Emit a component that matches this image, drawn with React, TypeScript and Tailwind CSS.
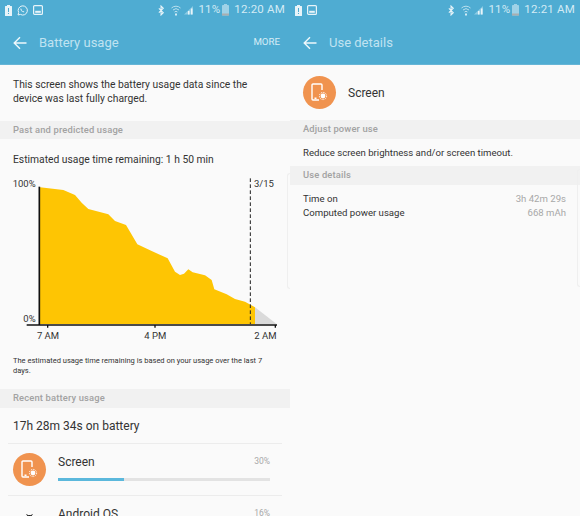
const chartPoints =
  '120,52 190,60 225,75 245,98 265,117 325,133 345,153 378,165 390,185 412,223 455,243 503,265 525,305 540,315 552,311 565,298 578,307 615,316 635,330 643,358 680,373 705,387 735,395 765,412 765,462 120,462';

// samsung style status bar icons
const BatteryAlert = () => (
  <svg width="7" height="11" viewBox="0 0 7 11">
    <path d="M2 0h3v1h1.5a.5.5 0 0 1 .5.5v9a.5.5 0 0 1-.5.5h-6a.5.5 0 0 1-.5-.5v-9a.5.5 0 0 1 .5-.5H2z" fill="#e8f4f9" />
    <rect x="3" y="3" width="1" height="4" fill="#4facd2" />
    <rect x="3" y="8" width="1" height="1" fill="#4facd2" />
  </svg>
);

const WhatsappIcon = () => (
  <svg width="11" height="11" viewBox="0 0 11 11">
    <path d="M1 10l.7-2.4A4.6 4.6 0 1 1 3.4 9.4z" fill="none" stroke="#e8f4f9" strokeWidth="1" />
    <path d="M3.7 3.3c-.6.8 0 2 .9 2.9s2 1.4 2.8.8l-.8-1-.7.4-1.5-1.5.4-.7z" fill="#e8f4f9" />
  </svg>
);

const PictureIcon = () => (
  <svg width="10" height="10" viewBox="0 0 10 10">
    <rect x="0.6" y="0.6" width="8.8" height="8.8" rx="1" fill="none" stroke="#e8f4f9" strokeWidth="1.2" />
    <path d="M2.2 7.8v-2h5.6v2z" fill="#e8f4f9" />
  </svg>
);

const StatusRight = ({ time }: { time: string }) => (
  <div className="flex items-center text-[#d3ebf5]">
    <svg width="7" height="11" viewBox="0 0 8 11" className="mr-[6px]">
      <path d="M1 3l5 5-2.5 2.5v-10L6 3 1 8" fill="none" stroke="#e8f4f9" strokeWidth="1.3" />
    </svg>
    <svg width="10" height="11" viewBox="0 0 10 11" className="mr-[3px]">
      <path d="M0.5 3a6.5 6.5 0 0 1 9 0M2 5a4.4 4.4 0 0 1 6 0M3.5 7a2.2 2.2 0 0 1 3 0" fill="none" stroke="#b9dfee" strokeWidth="1" />
      <path d="M4 8.5h2v2h-2z" fill="#d3ebf5" />
    </svg>
    <svg width="10" height="10" viewBox="0 0 10 10" className="mr-[4px]">
      <path d="M9 1v8.5H0z" fill="#8ccae3" />
      <path d="M4 9.5V6h1.5v3.5zM7 9.5V3.5h1.5v6z" fill="#e8f4f9" />
    </svg>
    <span className="text-[11.5px] tracking-[0.2px]">11%</span>
    <svg width="7" height="12" viewBox="0 0 7 12" className="ml-[2px] mr-[5px]">
      <rect x="2" y="0" width="3" height="1.5" fill="#9fd2e7" />
      <rect x="0" y="1" width="7" height="10.5" rx="0.8" fill="#9fd2e7" />
      <rect x="0" y="9.5" width="7" height="2" fill="#a9aeb0" />
    </svg>
    <span className="text-[11.5px] tracking-[0.2px]">{time}</span>
  </div>
);

const BackArrow = () => (
  <svg width="14" height="14" viewBox="0 0 14 14">
    <path d="M13.5 7H1.5M7 1.2 1.2 7 7 12.8" fill="none" stroke="#eef8fc" strokeWidth="1.4" />
  </svg>
);

const Header = ({ title, time, left, more }: { title: string; time: string; left: React.ReactNode; more?: boolean }) => (
  <header className="h-[65px] bg-[#4facd2] border-b border-[#66b5d6]">
    <div className="h-[20px] flex items-center justify-between pl-[5px] pr-[5px]">
      <div className="flex items-center gap-[5px]">{left}</div>
      <StatusRight time={time} />
    </div>
    <div className="h-[45px] flex items-center pl-[13px] pr-[10px]">
      <BackArrow />
      <span className="ml-[12px] text-[13px] text-[#c0e3f1]">{title}</span>
      {more && <span className="ml-auto text-[9.7px] text-[#d6edf6]">MORE</span>}
    </div>
  </header>
);

const SectionLabel = ({ children, className }: { children: string; className: string }) => (
  <div className={`bg-[#f1f1f1] pl-[13px] flex items-center text-[9.4px] font-medium tracking-[0.15px] text-[#a2a2a2] ${className}`}>
    {children}
  </div>
);

const ScreenIcon = () => (
  <div className="w-[33px] h-[33px] shrink-0 rounded-full bg-[#f0934f] flex items-center justify-center">
    <svg width="17" height="19" viewBox="0 0 17 19">
      <path d="M11 7V2a1 1 0 0 0-1-1H2a1 1 0 0 0-1 1v14a1 1 0 0 0 1 1h6" fill="none" stroke="#fff" strokeWidth="1.4" />
      <rect x="3.5" y="14.5" width="2" height="1.5" fill="#fff" />
      <circle cx="12" cy="13" r="2.4" fill="#fff" />
      <circle cx="12" cy="13" r="3.6" fill="none" stroke="#fff" strokeWidth="1" strokeDasharray="1.3 1.1" />
    </svg>
  </div>
);

// the faint card edge peeking in at the right of each screen
const CardEdge = ({ className }: { className: string }) => (
  <div className={`absolute right-0 w-[3px] border border-r-0 border-[#efefef] rounded-l-[5px] ${className}`} />
);

const Chart = () => (
  <svg width="290" height="180" viewBox="0 0 870 540" className="block" fontFamily="Roboto, sans-serif" fontSize="28.5" fill="#333">
    <polygon points="765,412 830,462 765,462" fill="#dadada" />
    <polygon points={chartPoints} fill="#fec503" />
    <path d="M118 50V465" stroke="#111" strokeWidth="5" />
    <path d="M80 465H831" stroke="#111" strokeWidth="4" />
    <path d="M143 465v8M465 465v8M826 465v8" stroke="#111" strokeWidth="4" />
    <path d="M751 25V462" stroke="#222" strokeWidth="3" strokeDasharray="11 7" />
    <text x="107" y="51" textAnchor="end">100%</text>
    <text x="107" y="456" textAnchor="end">0%</text>
    <text x="762" y="50">3/15</text>
    <text x="144" y="506" textAnchor="middle">7 AM</text>
    <text x="466" y="506" textAnchor="middle">4 PM</text>
    <text x="796" y="506" textAnchor="middle">2 AM</text>
  </svg>
);

const AndroidHead = () => (
  <svg width="33" height="12" viewBox="0 0 33 12" className="shrink-0">
    <path d="M12 9a4.5 4 0 0 1 9 0v3h-9z" fill="#1c1c1c" />
    <path d="M13.5 4l1.5 2M19.5 4l-1.5 2" stroke="#1c1c1c" strokeWidth="0.8" />
    <path d="M10.5 9h1v3h-1zM21.5 9h1v3h-1z" fill="#1c1c1c" />
  </svg>
);

const BatteryUsage = () => (
  <div className="relative w-[290px] h-[516px] overflow-hidden bg-[#fafafa]">
    <Header
      title="Battery usage"
      time="12:20 AM"
      more
      left={
        <>
          <BatteryAlert />
          <WhatsappIcon />
          <PictureIcon />
        </>
      }
    />
    <p className="pt-[13px] pl-[13px] pr-[20px] text-[10.3px] leading-[14px] text-[#333]">
      This screen shows the battery usage data since the device was last fully charged.
    </p>
    <SectionLabel className="mt-[15px] h-[18px]">Past and predicted usage</SectionLabel>
    <p className="mt-[14px] pl-[13px] text-[10.3px] leading-[14px] text-[#333]">
      Estimated usage time remaining: 1 h 50 min
    </p>
    <div className="mt-[3px]">
      <Chart />
    </div>
    <p className="mt-[6px] pl-[13px] pr-[20px] text-[7.5px] leading-[10px] text-[#333]">
      The estimated usage time remaining is based on your usage over the last 7 days.
    </p>
    <SectionLabel className="mt-[13px] h-[19px]">Recent battery usage</SectionLabel>
    <div className="mx-[8px] border-b border-[#ececec] h-[36px] flex items-center pl-[5px] text-[12px] text-[#333]">
      17h 28m 34s on battery
    </div>
    <div className="mx-[8px] border-b border-[#ececec] h-[52px] flex items-center pl-[5px] pr-[12px]">
      <ScreenIcon />
      <div className="ml-[12px] flex-1 pb-[4px]">
        <div className="flex items-center justify-between pb-[9px]">
          <span className="text-[12px] leading-[14px] text-[#333]">Screen</span>
          <span className="text-[8.5px] text-[#a8a8a8]">30%</span>
        </div>
        <div className="h-[3px] bg-[#e3e3e3]">
          <div className="h-full w-[66px] bg-[#5bb8dc]" />
        </div>
      </div>
    </div>
    <div className="mx-[8px] flex pl-[5px] pr-[12px] pt-[11px]">
      <div className="pt-[3px]">
        <AndroidHead />
      </div>
      <div className="ml-[12px] flex-1 flex justify-between">
        <span className="text-[12px] leading-[14px] text-[#333]">Android OS</span>
        <span className="text-[8.5px] text-[#a8a8a8]">16%</span>
      </div>
    </div>
    <CardEdge className="top-[173px] h-[116px]" />
  </div>
);

const UseDetails = () => (
  <div className="relative w-[290px] h-[516px] overflow-hidden bg-[#fafafa]">
    <Header title="Use details" time="12:21 AM" left={<><BatteryAlert /><PictureIcon /></>} />
    <div className="h-[55px] flex items-center pl-[13px]">
      <ScreenIcon />
      <span className="ml-[12px] text-[12px] text-[#333]">Screen</span>
    </div>
    <SectionLabel className="h-[19px]">Adjust power use</SectionLabel>
    <p className="h-[27px] flex items-center pl-[13px] pt-[1px] text-[9.6px] text-[#333]">
      Reduce screen brightness and/or screen timeout.
    </p>
    <SectionLabel className="h-[19px]">Use details</SectionLabel>
    <div className="pt-[7px] pl-[13px] pr-[14px] text-[9.6px] leading-[14px]">
      <div className="flex justify-between">
        <span className="text-[#333]">Time on</span>
        <span className="text-[#a8a8a8]">3h 42m 29s</span>
      </div>
      <div className="flex justify-between">
        <span className="text-[#333]">Computed power usage</span>
        <span className="text-[#a8a8a8]">668 mAh</span>
      </div>
    </div>
    <CardEdge className="top-[169px] h-[118px]" />
  </div>
);

export default function App() {
  return (
    <div className="flex w-[580px] h-[516px] overflow-hidden font-['Roboto',sans-serif]">
      <BatteryUsage />
      <UseDetails />
    </div>
  );
}
